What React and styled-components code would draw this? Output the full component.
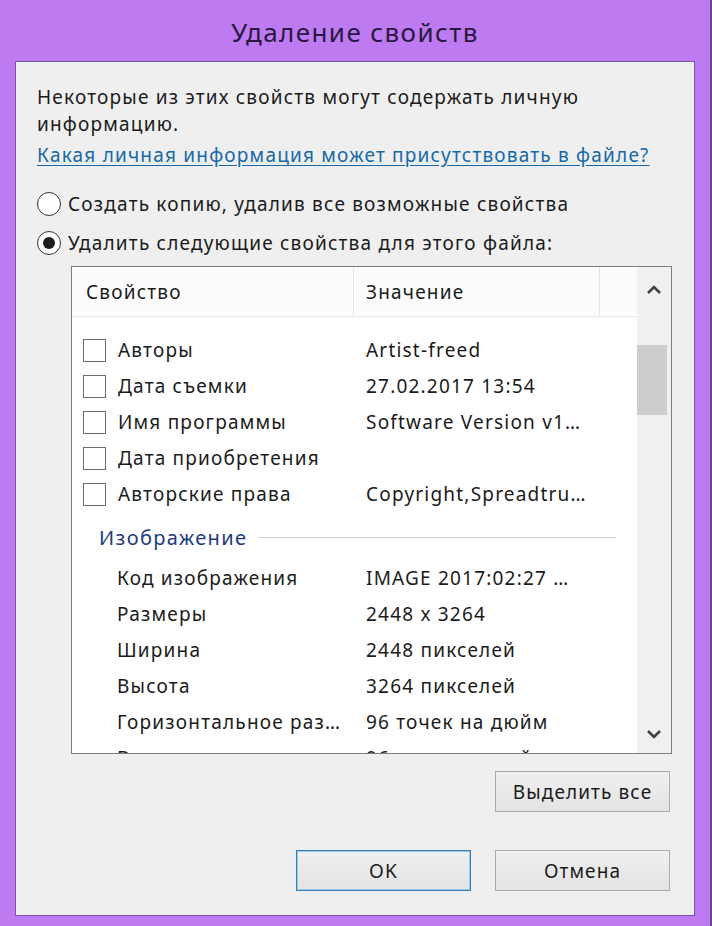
import React from 'react';
import styled, { createGlobalStyle } from 'styled-components';

const GlobalStyle = createGlobalStyle`
  html, body {
    margin: 0;
    padding: 0;
  }
  body {
    font-family: "Noto Sans", "Open Sans", sans-serif;
    color: #1b1b1b;
  }
`;

const Frame = styled.div`
  width: 712px;
  height: 926px;
  box-sizing: border-box;
  background-color: #bd7af1;
  border-right: 2px solid #6a4a86;
  padding: 0 15px 10px 15px;
  display: flex;
  flex-direction: column;
`;

const TitleBar = styled.div`
  height: 61px;
  display: flex;
  align-items: center;
  justify-content: center;
  padding-top: 2px;
  box-sizing: border-box;
  font-size: 26px;
  letter-spacing: 1.4px;
  color: #2a1742;
`;

const Client = styled.div`
  flex: 1;
  background-color: #efefef;
  border: 1px solid #7a55a3;
  padding: 22px 22px 0 21px;
  display: flex;
  flex-direction: column;
  font-size: 19px;
  letter-spacing: 1.2px;
`;

const Paragraph = styled.div`
  line-height: 27px;
`;

const Link = styled.a`
  margin-top: 4px;
  line-height: 27px;
  color: #1668a8;
  text-decoration: underline;
  text-underline-offset: 3px;
`;

const RadioGroup = styled.div`
  display: flex;
  flex-direction: column;
  gap: 3px;
  margin-top: 17px;
`;

const RadioRow = styled.label`
  display: flex;
  align-items: center;
  height: 36px;
  gap: 7px;
`;

const RadioCircle = styled.span`
  width: 22px;
  height: 22px;
  border-radius: 50%;
  border: 1.5px solid #333;
  background: #fff;
  display: flex;
  align-items: center;
  justify-content: center;

  &::after {
    content: '';
    width: 12px;
    height: 12px;
    border-radius: 50%;
    background: #1e1e1e;
    display: ${(p) => (p.checked ? 'block' : 'none')};
  }
`;

const ListBox = styled.div`
  margin: 5px 0 0 34px;
  height: 488px;
  box-sizing: border-box;
  border: 1px solid #7d7d7d;
  background: #fff;
  display: flex;
  overflow: hidden;
`;

const ListContent = styled.div`
  flex: 1;
  overflow: hidden;
`;

const HeaderRow = styled.div`
  display: flex;
  height: 49px;
  border-bottom: 1px solid #e6e6e6;
  background: #fcfcfc;
`;

const HeaderCell = styled.div`
  width: ${(p) => p.width}px;
  box-sizing: border-box;
  padding-left: ${(p) => p.pad}px;
  display: flex;
  align-items: center;
  border-right: ${(p) => (p.divider ? '1px solid #e4e4e4' : 'none')};
`;

const Body = styled.div`
  padding-top: 15px;
`;

const Row = styled.div`
  display: flex;
  align-items: center;
  height: 36px;
`;

const LabelCell = styled.div`
  width: 284px;
  display: flex;
  align-items: center;
  box-sizing: border-box;
  padding-left: ${(p) => (p.checkbox ? 11 : 45)}px;
  gap: 12px;
  white-space: nowrap;
`;

const ValueCell = styled.div`
  white-space: nowrap;
  padding-left: 10px;
`;

const Checkbox = styled.span`
  width: 23px;
  height: 23px;
  box-sizing: border-box;
  border: 1px solid #6e6e6e;
  background: #fff;
`;

const GroupRow = styled.div`
  height: 48px;
  padding: 2px 21px 0 27px;
  box-sizing: border-box;
  display: flex;
  align-items: center;
  gap: 10px;
  font-size: 20px;
  letter-spacing: 1.4px;
  color: #213b7c;

  &::after {
    content: '';
    flex: 1;
    height: 1px;
    background: #cfcfcf;
  }
`;

const Scrollbar = styled.div`
  width: 34px;
  background: #f0f0f0;
  display: flex;
  flex-direction: column;
  align-items: center;
`;

const ArrowBox = styled.div`
  height: ${(p) => p.h}px;
  display: flex;
  align-items: center;
  justify-content: center;
  width: 100%;
`;

const Track = styled.div`
  flex: 1;
  width: 100%;
  padding-top: 32px;
  box-sizing: border-box;
`;

const Thumb = styled.div`
  width: 30px;
  height: 70px;
  background: #cdcdcd;
`;

const ButtonRow = styled.div`
  display: flex;
  justify-content: flex-end;
  gap: 24px;
  margin-top: ${(p) => p.top}px;
  padding-right: 2px;
`;

const Button = styled.button`
  width: 175px;
  height: 41px;
  font-family: inherit;
  font-size: 19px;
  letter-spacing: 1.1px;
  color: #1b1b1b;
  background: linear-gradient(#f0f0f0, #e3e3e3);
  border: 1px solid ${(p) => (p.primary ? '#3a80b6' : '#acacac')};
  box-shadow: ${(p) => (p.primary ? 'inset 0 0 0 1px #9ac6e8' : 'none')};
  padding: 0;
`;

const Arrow = ({ down }) => (
  <svg width="14" height="10" viewBox="0 0 14 10">
    <path
      d={down ? 'M1 2 L7 8 L13 2' : 'M1 8 L7 2 L13 8'}
      fill="none"
      stroke="#404040"
      strokeWidth="2.6"
    />
  </svg>
);

const checkedRows = [
  ['Авторы', 'Artist-freed'],
  ['Дата съемки', '27.02.2017 13:54'],
  ['Имя программы', 'Software Version v1…'],
  ['Дата приобретения', ''],
  ['Авторские права', 'Copyright,Spreadtru…'],
];

const imageRows = [
  ['Код изображения', 'IMAGE 2017:02:27 …'],
  ['Размеры', '2448 x 3264'],
  ['Ширина', '2448 пикселей'],
  ['Высота', '3264 пикселей'],
  ['Горизонтальное раз…', '96 точек на дюйм'],
  ['Вертикальное разре…', '96 точек на дюйм'],
];

const App = () => (
  <>
    <GlobalStyle />
    <Frame>
      <TitleBar>Удаление свойств</TitleBar>
      <Client>
        <Paragraph>
          Некоторые из этих свойств могут содержать личную
          <br />
          информацию.
        </Paragraph>
        <Link>Какая личная информация может присутствовать в файле?</Link>
        <RadioGroup>
          <RadioRow>
            <RadioCircle />
            Создать копию, удалив все возможные свойства
          </RadioRow>
          <RadioRow>
            <RadioCircle checked />
            Удалить следующие свойства для этого файла:
          </RadioRow>
        </RadioGroup>
        <ListBox>
          <ListContent>
            <HeaderRow>
              <HeaderCell width={282} pad={14} divider>
                Свойство
              </HeaderCell>
              <HeaderCell width={246} pad={12} divider>
                Значение
              </HeaderCell>
            </HeaderRow>
            <Body>
              {checkedRows.map(([label, value]) => (
                <Row key={label}>
                  <LabelCell checkbox>
                    <Checkbox />
                    {label}
                  </LabelCell>
                  <ValueCell>{value}</ValueCell>
                </Row>
              ))}
              <GroupRow>Изображение</GroupRow>
              {imageRows.map(([label, value]) => (
                <Row key={label}>
                  <LabelCell>{label}</LabelCell>
                  <ValueCell>{value}</ValueCell>
                </Row>
              ))}
            </Body>
          </ListContent>
          <Scrollbar>
            <ArrowBox h={46}>
              <Arrow />
            </ArrowBox>
            <Track>
              <Thumb />
            </Track>
            <ArrowBox h={38}>
              <Arrow down />
            </ArrowBox>
          </Scrollbar>
        </ListBox>
        <ButtonRow top={17}>
          <Button>Выделить все</Button>
        </ButtonRow>
        <ButtonRow top={38}>
          <Button primary>OK</Button>
          <Button>Отмена</Button>
        </ButtonRow>
      </Client>
    </Frame>
  </>
);

export default App;
